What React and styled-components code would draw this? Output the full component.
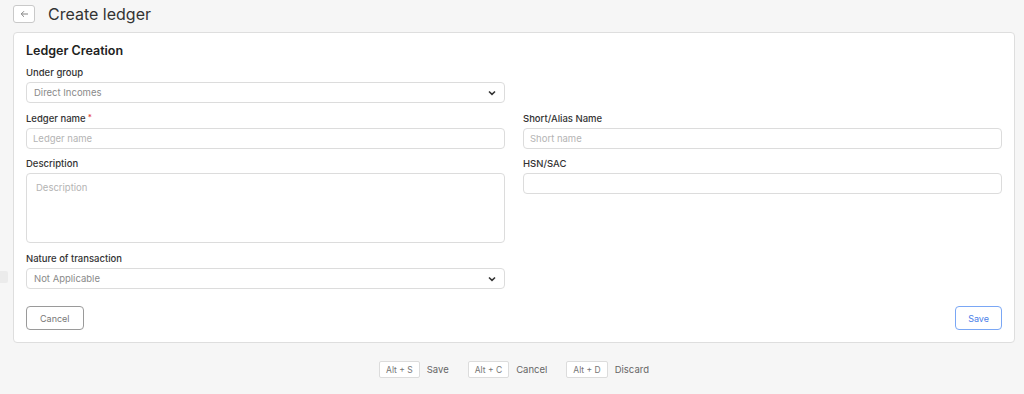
import React from 'react';
import styled, { createGlobalStyle } from 'styled-components';

const GlobalStyle = createGlobalStyle`
  html, body {
    margin: 0;
    padding: 0;
    background: #f6f6f6;
    font-family: Inter, "Open Sans", Arial, sans-serif;
    color: #333;
  }
  * { box-sizing: border-box; }
`;

const Page = styled.div`
  position: relative;
  height: 394px;
  padding: 5px 9px 0 13px;
`;

const EdgeTab = styled.div`
  position: absolute;
  left: 0;
  top: 271px;
  width: 8px;
  height: 12px;
  background: #ebebeb;
  border-radius: 0 2px 2px 0;
`;

const Header = styled.div`
  display: flex;
  align-items: center;
  gap: 13px;
  height: 18px;
  margin-bottom: 9px;
`;

const BackButton = styled.button`
  width: 22px;
  height: 18px;
  padding: 0;
  display: flex;
  align-items: center;
  justify-content: center;
  background: #fff;
  border: 1px solid #c9c9c9;
  border-radius: 3px;
  color: #666;
`;

const Title = styled.h1`
  margin: 0;
  font-size: 16px;
  font-weight: 400;
  color: #333;
  line-height: 18px;
`;

const Card = styled.div`
  background: #fff;
  border: 1px solid #dedede;
  border-radius: 4px;
  padding: 9px 12px 12px 12px;
`;

const CardTitle = styled.h2`
  margin: 0 0 5px;
  font-size: 12.5px;
  font-weight: 600;
  line-height: 18px;
  color: #222;
`;

const FormGrid = styled.div`
  display: grid;
  grid-template-columns: 479px 479px;
  column-gap: 18px;
  row-gap: 7.7px;
  align-items: start;
`;

const Field = styled.div`
  display: flex;
  flex-direction: column;
  grid-column: ${p => p.$col || 'auto'};
`;

const Label = styled.label`
  display: block;
  height: 15px;
  font-size: 9.5px;
  font-weight: 500;
  line-height: 15px;
  margin-bottom: 2px;
  color: #333;
`;

const Required = styled.span`
  position: relative;
  top: -2px;
  margin-left: 2px;
  font-size: 8px;
  line-height: 0;
  color: #e53935;
`;

const Input = styled.input`
  height: 21px;
  border: 1px solid #dcdcdc;
  border-radius: 4px;
  padding: 0 6px;
  font-family: inherit;
  font-size: 9.5px;
  color: #555;
  outline: none;
  background: #fff;

  &::placeholder {
    color: #b4b4b4;
  }
`;

const TextArea = styled.textarea`
  display: block;
  height: 70px;
  resize: none;
  border: 1px solid #dcdcdc;
  border-radius: 4px;
  padding: 8px 9px;
  font-family: inherit;
  font-size: 9.5px;
  outline: none;

  &::placeholder {
    color: #b4b4b4;
  }
`;

const SelectBox = styled.div`
  height: 21px;
  border: 1px solid #dcdcdc;
  border-radius: 4px;
  padding: 0 8px 0 7px;
  display: flex;
  align-items: center;
  justify-content: space-between;
  font-size: 9.5px;
  color: #8a8a8a;
  background: #fff;
`;

const Actions = styled.div`
  display: flex;
  justify-content: space-between;
  margin-top: 17px;
`;

const Button = styled.button`
  height: 24px;
  padding: 0 ${p => (p.$primary ? '12px' : '13px')};
  background: #fff;
  border: 1px solid ${p => (p.$primary ? '#7aa7f5' : '#9a9a9a')};
  border-radius: 4px;
  font-family: inherit;
  font-size: 9px;
  color: ${p => (p.$primary ? '#4a7ee8' : '#777')};
`;

const Shortcuts = styled.div`
  display: flex;
  justify-content: center;
  align-items: center;
  gap: 19px;
  margin-top: 18px;
`;

const Shortcut = styled.div`
  display: flex;
  align-items: center;
  gap: 7px;
  font-size: 9.5px;
  color: #666;
`;

const Key = styled.span`
  height: 17px;
  padding: 0 6px;
  display: flex;
  align-items: center;
  background: #fff;
  border: 1px solid #dcdcdc;
  border-radius: 2px;
  font-size: 8.5px;
  color: #777;
`;

const Chevron = () => (
  <svg width="8" height="6" viewBox="0 0 8 6">
    <path d="M1 1.5 L4 4.3 L7 1.5" fill="none" stroke="#333" strokeWidth="1.6" />
  </svg>
);

const ArrowLeft = () => (
  <svg width="9" height="8" viewBox="0 0 9 8">
    <path d="M8 4 H1.5 M4 1.2 L1.2 4 L4 6.8" fill="none" stroke="#777" strokeWidth="0.9" />
  </svg>
);

const Select = ({ value }) => (
  <SelectBox>
    {value}
    <Chevron />
  </SelectBox>
);

export default function App() {
  return (
    <Page>
      <GlobalStyle />
      <EdgeTab />
      <Header>
        <BackButton><ArrowLeft /></BackButton>
        <Title>Create ledger</Title>
      </Header>
      <Card>
        <CardTitle>Ledger Creation</CardTitle>
        <FormGrid>
          <Field $col="1">
            <Label>Under group</Label>
            <Select value="Direct Incomes" />
          </Field>
          <Field $col="1">
            <Label>Ledger name<Required>*</Required></Label>
            <Input placeholder="Ledger name" />
          </Field>
          <Field $col="2">
            <Label>Short/Alias Name</Label>
            <Input placeholder="Short name" />
          </Field>
          <Field $col="1">
            <Label>Description</Label>
            <TextArea placeholder="Description" />
          </Field>
          <Field $col="2">
            <Label>HSN/SAC</Label>
            <Input />
          </Field>
          <Field $col="1">
            <Label>Nature of transaction</Label>
            <Select value="Not Applicable" />
          </Field>
        </FormGrid>
        <Actions>
          <Button>Cancel</Button>
          <Button $primary>Save</Button>
        </Actions>
      </Card>
      <Shortcuts>
        <Shortcut><Key>Alt + S</Key>Save</Shortcut>
        <Shortcut><Key>Alt + C</Key>Cancel</Shortcut>
        <Shortcut><Key>Alt + D</Key>Discard</Shortcut>
      </Shortcuts>
    </Page>
  );
}
